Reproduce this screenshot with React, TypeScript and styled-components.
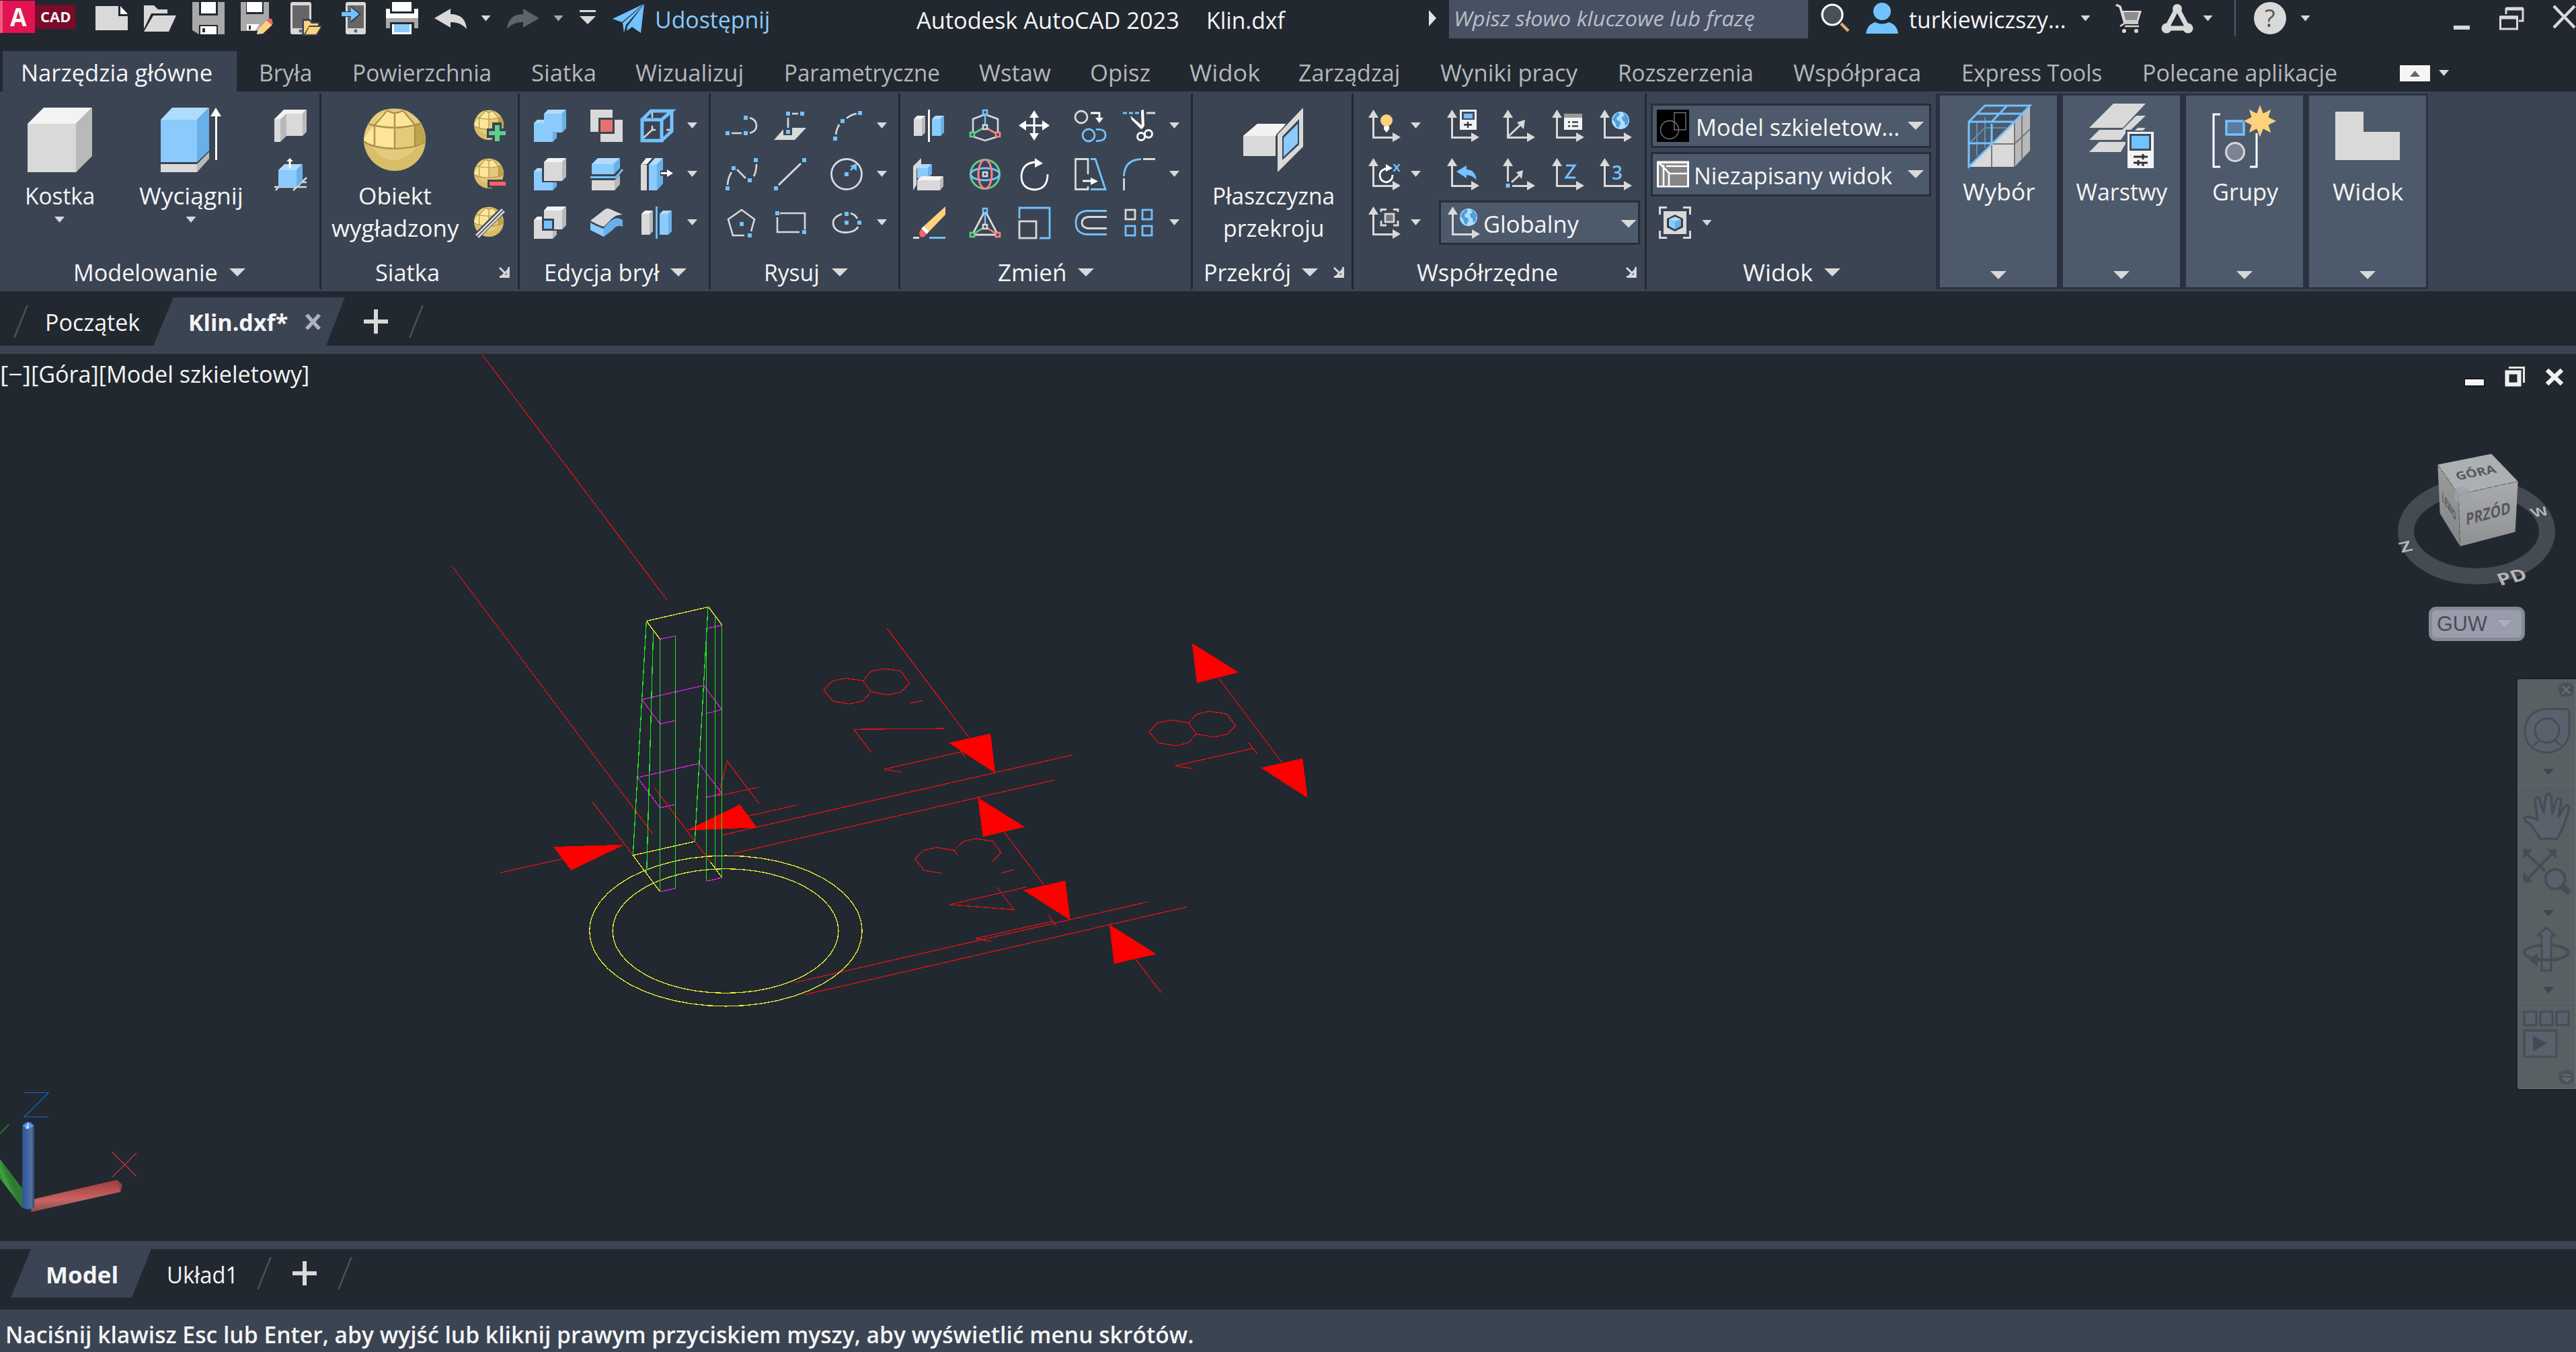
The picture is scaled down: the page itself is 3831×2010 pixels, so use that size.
import React, { useLayoutEffect, useRef, useState } from 'react';
import styled, { createGlobalStyle } from 'styled-components';

const c = {
  dark: '#222830',
  canvas: '#212830',
  panel: '#3b4453',
  tile: '#4d5a6c',
  edge: '#262e3a',
  text: '#f5f5f5',
  dim: '#b4b7bb',
  grey: '#d9d9d9',
  greyTop: '#f3f3f3',
  greySide: '#b9b9b9',
  blue: '#8acafc',
  blueTop: '#aedcff',
  blueSide: '#69b0e8',
  sky: '#72c2ff',
  red: '#e6706f',
  green: '#5fd08a',
  amber: '#fdd27a',
};

const Global = createGlobalStyle`
  html, body { margin: 0; padding: 0; background: ${c.dark}; overflow: hidden; }
  * { box-sizing: border-box; }
  svg { display: block; flex: none; }
`;

/* ---------- text that fills a known label width ---------- */

const LabelBox = styled.span<{ $w: number; $ml: number; $mt: number; $lh: number }>`
  display: block;
  flex: none;
  width: ${p => p.$w}px;
  margin-left: ${p => p.$ml}px;
  margin-top: ${p => p.$mt}px;
  height: ${p => p.$lh}px;
  line-height: ${p => p.$lh}px;
  white-space: nowrap;
`;
const LabelText = styled.span<{ $size: number; $weight: number; $color: string; $italic: boolean; $font: string }>`
  display: inline-block;
  margin-left: -1px;
  transform-origin: 0 50%;
  font-family: ${p => p.$font};
  font-size: ${p => p.$size}px;
  font-weight: ${p => p.$weight};
  font-style: ${p => (p.$italic ? 'italic' : 'normal')};
  color: ${p => p.$color};
`;

type LabelProps = {
  children: string; w: number; ml?: number; mt?: number; lh?: number;
  size?: number; weight?: number; color?: string; italic?: boolean; font?: string;
};
function Label({
  children, w, ml = 0, mt = 0, lh = 48, size = 34, weight = 400, color = c.text, italic = false,
  font = "'Open Sans', 'Noto Sans', sans-serif",
}: LabelProps) {
  const ref = useRef<HTMLSpanElement>(null);
  const [scale, setScale] = useState(1);
  useLayoutEffect(() => {
    if (ref.current) setScale((w + 3) / ref.current.offsetWidth);
  }, [w, children]);
  return (
    <LabelBox $w={w} $ml={ml} $mt={mt} $lh={lh}>
      <LabelText ref={ref} $size={size} $weight={weight} $color={color} $italic={italic} $font={font} style={{ transform: `scaleX(${scale})` }}>
        {children}
      </LabelText>
    </LabelBox>
  );
}

/* ---------- icon parts ---------- */

type Pal = [string, string, string];
const G: Pal = [c.grey, c.greyTop, c.greySide];
const B: Pal = [c.blue, c.blueTop, c.blueSide];

function Block({ x, y, w, h, d, p }: { x: number; y: number; w: number; h: number; d: number; p: Pal }) {
  return (
    <g>
      <rect x={x} y={y + d} width={w - d} height={h - d} fill={p[0]} />
      <path d={`M${x} ${y + d}l${d} ${-d}h${w - d}l${-d} ${d}z`} fill={p[1]} />
      <path d={`M${x + w - d} ${y + d}l${d} ${-d}v${h - d}l${-d} ${d}z`} fill={p[2]} />
    </g>
  );
}
const Dot = ({ x, y, f = c.sky }: { x: number; y: number; f?: string }) => <rect x={x - 3} y={y - 3} width={6} height={6} fill={f} />;
const Node = ({ x, y, s }: { x: number; y: number; s: string }) => (
  <rect x={x - 3} y={y - 3} width={6} height={6} fill={c.panel} stroke={s} strokeWidth={2.6} />
);
const Axes = () => (
  <g fill={c.grey}>
    <path d="M7.5 0L15 12H9V40H36V34L48 41L36 48V43H6V12H0Z" />
  </g>
);
const Globe = ({ x, y, r }: { x: number; y: number; r: number }) => (
  <g>
    <circle cx={x} cy={y} r={r} fill={c.blueTop} />
    <path
      transform={`translate(${x} ${y}) scale(${r / 13})`}
      d="M-10-6L-4-12L-1-10L-3-6L-6-4L-5 0L-1 1L0 5L-3 11L-6 9L-8 3L-12-1ZM3-12L8-9L12-3L11 5L7 8L6 2L3 0L2-5L6-7Z"
      fill="#4b9fdc"
    />
  </g>
);
const Egg = ({ s = 1 }: { s?: number }) => (
  <g transform={`scale(${s})`}>
    <circle cx="48" cy="48" r="46" fill="#d8be6a" />
    <path d="M2 50C4 28 14 8 34 3C44 1 56 1 64 4C84 12 94 30 94 50Q92 56 80 60Q66 76 48 78Q28 78 16 60Z" fill="#e4cb7c" />
    <path d="M17 27Q26 8 37 4Q48 12 62 5L78 27L48 31V61L17 57L2 50Q4 40 17 27Z" fill="#fde59a" />
    <path d="M48 31L78 27V57L48 61Z" fill="#e4cb7c" />
    <path d="M78 27L86 23Q93 34 94 50L78 57Z" fill="#c0a44c" />
    <path
      d="M37 4Q48 12 60 4M37 4L18 26M60 4L79 27M48 8V61M18 26V57M78 27V57M8 24Q48 36 88 23M2 50Q14 60 48 61Q84 60 94 50"
      fill="none" stroke="#ae914a" strokeWidth="2.4"
    />
  </g>
);
const Line = ({ d, s = c.grey, w = 2.6 }: { d: string; s?: string; w?: number }) => <path d={d} fill="none" stroke={s} strokeWidth={w} />;
const Poly = ({ d, f = c.grey }: { d: string; f?: string }) => <path d={d} fill={f} />;

/* Drawn on a 48 unit square unless the name starts with "big" (96 unit square). */
const icons: Record<string, React.ReactNode> = {
  bigBox: <Block x={0} y={0} w={96} h={96} d={24} p={G} />,
  bigExtrude: (
    <g>
      <Poly d="M3 84H57V96H3Z" /><Poly d="M57 84L75 66V76L57 96Z" f={c.greySide} />
      <Poly d="M3 18H57V81H3Z" f={c.blue} /><Poly d="M3 18L20 0H75L57 18Z" f={c.blueTop} /><Poly d="M57 18L75 0V64L57 81Z" f={c.blueSide} />
      <Poly d="M85 0L93 13H87V78H84V13H77Z" f="#fff" />
    </g>
  ),
  bigEgg: <Egg />,
  bigSection: (
    <g>
      <Poly d="M3 42L24 24H64L51 40V72H3Z" /><Poly d="M3 42L24 24H66L54 42Z" f={c.greyTop} />
      <Poly d="M52 40L94 -4V62L52 98Z" f={c.panel} />
      <Poly d="M54 40L92 0V58L54 96Z" /><Poly d="M61 43L86 17V55L61 78Z" f={c.panel} /><Poly d="M63 45L84 24V53L63 73Z" f={c.blue} />
    </g>
  ),
  bigPick: (
    <g>
      <Poly d="M5 94L72 26V94Z" /><Poly d="M72 26L95 4V70L72 94Z" f={c.greySide} />
      <Line d="M38 94V60H72M83 15V82M72 60L95 38M72 28V94" s="#777" w={2} />
      <Line d="M16 26V78M28 20V66M4 60L28 36H60" s="#5a8fb8" w={2} />
      <Line d="M4 27H72L95 3H28L4 27V94L72 27M38 27L61 3M16 15H84M4 59H38V30" s={c.sky} w={3} />
    </g>
  ),
  bigLayers: (
    <g>
      <Poly d="M36 0H84L50 36H0Z" /><Poly d="M70 18H84L62 39H49Z" /><Poly d="M72 36H84L80 40H68Z" />
      <Poly d="M15 39H54V44L47 54H0Z" /><Poly d="M15 57H54V60L47 72H0Z" />
      <path d="M54 40H98V98H54Z" fill={c.tile} />
      <path d="M57 42H96V96H57Z" fill={c.greyTop} /><rect x="60" y="45" width="32" height="25" fill="#404c5c" /><rect x="63" y="48" width="26" height="19" fill={c.sky} />
      <Line d="M66 79H87M80 75V83M66 88H87M73 84V92M80 88V93" s="#333" w={3} />
    </g>
  ),
  bigGroup: (
    <g>
      <Line d="M12 16H2V94H12M56 94H66V44" s="#fff" w={3} />
      <rect x="21" y="26" width="26" height="20" fill="#5c7b9c" stroke={c.sky} strokeWidth="3.5" />
      <circle cx="34" cy="72" r="13.5" fill="#7b8494" stroke={c.grey} strokeWidth="3" />
      <path d="M71 1L76 14L88 8L84 20L96 26L84 32L88 44L76 38L71 51L66 38L54 44L58 32L46 26L58 20L54 8L66 14Z" fill={c.amber} stroke={c.tile} strokeWidth="1" />
    </g>
  ),
  bigView: <Poly d="M0 12H42V42H96V84H0Z" />,
  polysolid: (
    <g>
      <Poly d="M0 14L14 0H48L42 6H26L18 12L9 21L0 14Z" f={c.greyTop} /><Poly d="M0 14H9V48H0Z" /><Poly d="M9 14L18 6V39L9 48Z" f={c.greySide} />
      <Poly d="M18 6H42V39H18Z" /><Poly d="M42 6L48 0V33L42 39Z" f={c.greySide} />
    </g>
  ),
  presspull: (
    <g>
      <Line d="M0 43H43M2 48L7 42M28 48L48 29M36 43H48M42 36H48" w={2.6} />
      <Block x={6} y={9} w={36} h={34} d={9} p={B} /><Poly d="M23 0L28 5H24.5V15H21.5V5H18Z" f="#fff" />
    </g>
  ),
  eggPlus: (
    <g><Egg s={0.48} /><Poly d="M28 19H42V28H50V42H42V50H28V42H20V28H28Z" f={c.panel} /><Poly d="M32 23H39V32H48V38H39V47H32V38H23V32H32Z" f={c.green} /></g>
  ),
  eggMinus: <g><Egg s={0.48} /><Poly d="M21 32H50V44H21Z" f={c.panel} /><Poly d="M24 35H48V41H24Z" f="#ff6163" /></g>,
  eggSlash: <g><Egg s={0.48} /><Line d="M4 45L46 3" s={c.panel} w={10} /><Line d="M4 43L43 4M7 46L46 7" w={2.6} /></g>,
  union: (
    <g>
      <Block x={15} y={0} w={33} h={34} d={6} p={B} />
      <Poly d="M0 20H16V33H28V48H0Z" f={c.blue} /><Poly d="M0 20L5 15H15V20Z" f={c.blueTop} /><Poly d="M28 33H34V42L28 48Z" f={c.blueSide} />
    </g>
  ),
  subtract: (
    <g>
      <Block x={15} y={0} w={33} h={34} d={6} p={G} />
      <Poly d="M0 20L5 15H12V36H28V48H0Z" f={c.blue} /><Poly d="M0 20L5 15H12V20Z" f={c.blueTop} /><Poly d="M28 36H34V42L28 48Z" f={c.blueSide} />
    </g>
  ),
  intersect: (
    <g>
      <Poly d="M15 6H42V34H30V18H15Z" /><Poly d="M15 6L20 0H48L42 6Z" f={c.greyTop} /><Poly d="M42 6L48 0V28L42 34Z" f={c.greySide} />
      <Poly d="M0 20H12V36H28V48H0Z" /><Poly d="M0 20L5 15H12V20Z" f={c.greyTop} /><Poly d="M28 36H34V42L28 48Z" f={c.greySide} />
      <Poly d="M15 21H27V33H15Z" f={c.sky} />
    </g>
  ),
  interfere: <g><Poly d="M0 0H33V12H12V33H0Z" /><Poly d="M36 15H48V48H15V36H36Z" /><Poly d="M15 15H33V33H15Z" f={c.red} /></g>,
  slice: (
    <g>
      <Block x={2} y={0} w={42} h={24} d={9} p={B} /><Line d="M0 28.5H38L48 17" s={c.sky} w={2.8} />
      <Poly d="M2 33H36V48H2Z" /><Poly d="M36 33L44 25V39L36 48Z" f={c.greySide} />
    </g>
  ),
  thicken: (
    <g>
      <Poly d="M20 32Q28 22 34 19Q40 15 48 20V30Q40 26 33 35L20 45Z" f={c.blueSide} /><Poly d="M0 24Q8 29 20 33V45L0 35Z" f={c.blue} />
      <Poly d="M0 21L22 4Q26 1 34 6L48 12Q38 12 32 18L20 30Q12 28 0 21Z" />
    </g>
  ),
  frame: (
    <g>
      <Line d="M17 3V12M17 24V30L4 42M17 30H22M38 30H46" s={c.grey} w={2.4} />
      <Line d="M2 15H31V46H2ZM2 15L15 2H46L31 15M46 2V32L31 46" s={c.sky} w={5} />
    </g>
  ),
  offsetFace: (
    <g>
      <Poly d="M0 10H9V48H0Z" /><Poly d="M0 10L8 0H17L9 9Z" f={c.greyTop} />
      <Poly d="M12 10H24V48H12Z" f={c.blue} /><Poly d="M12 10L21 0H33L24 10Z" f={c.blueTop} /><Poly d="M24 10L33 0V38L24 48Z" f={c.blueSide} />
      <Line d="M29 22.5H39" s={c.panel} w={8} /><Poly d="M30 21H39V17L48 22.5L39 28V24H30Z" f="#fff" />
    </g>
  ),
  mirror3d: <g><Block x={1} y={6} w={17} h={36} d={5} p={G} /><Block x={28} y={6} w={18} h={36} d={5} p={B} /><Line d="M23.5 0V48" s={c.sky} w={2.8} /></g>,
  polyline: <g><Dot x={3} y={35} /><Dot x={30} y={35} /><Dot x={30} y={12} /><Line d="M9 35H24M36 12Q46 15 46 24Q46 32 36 35" /></g>,
  spline3d: (
    <g><Poly d="M0 45L16 27H48L31 45Z" /><rect x="14" y="24" width="13" height="14" fill={c.panel} /><Dot x={21} y={33} /><Dot x={21} y={6} /><Dot x={42} y={6} /><Line d="M21 12V27M27 6H36" /></g>
  ),
  arc: <g><Dot x={7} y={43} /><Dot x={18} y={17} /><Dot x={44} y={5} /><Line d="M8 37Q9 29 13 22M24 13Q31 7 39 6" /></g>,
  spline: <g><Dot x={3} y={45} /><Dot x={12} y={15} /><Dot x={36} y={33} /><Dot x={45} y={3} /><Line d="M3 40Q4 28 9 21M17 17L30 30M42 27Q46 20 46 9" /></g>,
  line: <g><Dot x={3} y={45} /><Dot x={45} y={3} /><Line d="M7 40L40 8" w={3} /></g>,
  circle: <g><circle cx="24" cy="24" r="22.5" fill="none" stroke={c.grey} strokeWidth="2.8" /><Dot x={24} y={24} /><Line d="M30 18L35 13" s={c.sky} /><Poly d="M39 8V19L29 12Z" f={c.sky} /></g>,
  polygon: <g><Line d="M28 43H11L4 19L24 5L43 19L38 37" /><Dot x={24} y={26} /><Dot x={36} y={43} /></g>,
  rect: <g><Line d="M9 10H46V34M38 38H5V16" /><Dot x={5} y={10} /><Dot x={45} y={38} /></g>,
  ellipse: (
    <g><Line d="M17 11Q4 16 4 24Q4 33 13 37Q24 41 35 36Q40 33 41 30M30 10Q37 12 40 18" w={2.8} /><Dot x={24} y={11} /><Dot x={24} y={24} /><Dot x={43} y={24} /></g>
  ),
  mirror: <g><Block x={1} y={9} w={17} h={30} d={5} p={G} /><Block x={28} y={9} w={18} h={30} d={5} p={B} /><Line d="M23.5 0V48" s="#fff" w={2.8} /></g>,
  align3d: (
    <g><Poly d="M0 12L12 0V10L5 16V40L0 48Z" /><Block x={6} y={9} w={22} h={21} d={6} p={B} /><Poly d="M6 33L12 27H45L40 33Z" f={c.greyTop} /><Poly d="M6 33H40V48H6Z" /><Poly d="M40 33L45 27V42L40 48Z" f={c.greySide} /></g>
  ),
  erase: (
    <g><Poly d="M48 0V12L24 37L16 29Z" f={c.amber} /><Poly d="M16 29L24 37L20 41L12 33Z" f="#fff" /><Poly d="M12 34L20 41Q16 47 11 45Q7 39 12 34Z" f="#ff6163" /><Line d="M0 46.5H9" w={3} /><Line d="M24 46.5H48" s={c.sky} w={3} /></g>
  ),
  move3d: (
    <g>
      <Line d="M24 7L6 14V36M24 7L43 14V36M6 40L24 46L43 40" w={2.6} /><Line d="M24 4V24" s={c.sky} w={2.6} /><Line d="M24 26L4 37" s={c.green} /><Line d="M24 26L43 37" s="#f58488" />
      <Node x={24} y={4} s={c.sky} /><Node x={24} y={26} s={c.grey} /><Node x={5} y={37} s={c.green} /><Node x={43} y={37} s="#f58488" />
    </g>
  ),
  rotate3d: (
    <g fill="none" strokeWidth="3">
      <circle cx="24" cy="24" r="21.5" stroke={c.green} /><ellipse cx="24" cy="24" rx="21.5" ry="9" stroke={c.sky} /><ellipse cx="24" cy="24" rx="10" ry="21.5" stroke="#f58488" /><Node x={24} y={24} s={c.grey} />
    </g>
  ),
  scale3d: (
    <g>
      <Line d="M24 6L5 42H43Z" w={2.8} /><Line d="M24 6V28" s={c.sky} /><Line d="M24 30L5 42" s={c.green} /><Line d="M24 30L43 42" s="#f58488" />
      <Node x={24} y={6} s={c.sky} /><Node x={24} y={30} s={c.grey} /><Node x={5} y={42} s={c.green} /><Node x={43} y={42} s="#f58488" />
    </g>
  ),
  move: <Poly f="#fff" d="M24 1L31 12H25.5V22H36V16L47 23.5L36 31V25H25.5V35H31L24 46L17 35H22.5V25H12V31L1 23.5L12 16V22H22.5V12H17Z" />,
  rotate: <g><Line d="M28 6Q6 6 5 27Q5 46 25 47Q44 46 44 24" s="#fff" w={2.8} /><Poly d="M25 0L37 8L25 14Z" f="#fff" /></g>,
  scale: <g><Line d="M2 18V2H47V47H32" s={c.sky} w={2.8} /><rect x="2" y="22" width="25" height="25" fill="none" stroke={c.grey} strokeWidth="2.8" /></g>,
  copy: (
    <g fill="none" strokeWidth="2.8">
      <circle cx="10" cy="11" r="9" stroke={c.grey} /><circle cx="21" cy="38" r="9" stroke={c.sky} /><path d="M32 29.5Q46 28 46 38Q46 47 32 46.5" stroke={c.sky} />
      <path d="M24 5H37V14" stroke="#fff" /><path d="M31 12H43L37 20Z" fill="#fff" />
    </g>
  ),
  stretch: <g fill="none" strokeWidth="2.8"><path d="M20 24V1.5H1.5V46.5H20V42" stroke={c.grey} /><path d="M24 1.5H31L46 46.5H24" stroke={c.sky} /><path d="M12 34H27" stroke="#fff" /><path d="M24 29L35 34.5L24 40Z" fill="#fff" /></g>,
  offset: <g><Line d="M48 6.5H18Q2 8 2 24Q2 40 18 41.5H48" s={c.sky} w={2.8} /><Line d="M48 15.5H20Q11 17 11 24Q11 31 20 32.5H48" w={2.8} /></g>,
  trim: (
    <g>
      <Line d="M0 5H6M9 5H15M18 5H24" s={c.sky} w={3} /><Line d="M35 5H48" w={3} />
      <Poly d="M27 1L31 0L32 24L28 29Z" f="#fff" /><Poly d="M11 9L31 26L27 29L13 15Z" f="#fff" />
      <circle cx="27" cy="40" r="5.5" fill="none" stroke="#fff" strokeWidth="2.8" /><circle cx="38" cy="36" r="5.5" fill="none" stroke="#fff" strokeWidth="2.8" />
    </g>
  ),
  fillet: <g><Line d="M1.5 27Q2 3 27 1.5" s={c.sky} w={2.8} /><Line d="M30 1.5H48M1.5 30V48" w={2.8} /></g>,
  array: (
    <g fill="none" strokeWidth="2.8"><rect x="4" y="5" width="14" height="14" stroke={c.grey} /><rect x="29" y="5" width="14" height="14" stroke={c.sky} /><rect x="4" y="29" width="14" height="14" stroke={c.sky} /><rect x="29" y="29" width="14" height="14" stroke={c.sky} /></g>
  ),
  ucsLight: <g><Axes /><circle cx="27" cy="16" r="9" fill={c.amber} /><Poly d="M20 20H34L30 25H24Z" f={c.amber} /><Poly d="M23 25H31V29L27 34L23 29Z" f="#fff" /></g>,
  ucsRotX: (
    <g>
      <Axes /><Line d="M29 15Q17 17 17 26Q18 35 27 36Q36 34 36 25" s="#fff" w={2.8} /><Poly d="M26 9L36 15L26 20Z" f="#fff" />
      <text x="36" y="20" fontSize="20" fontWeight="600" fill={c.sky} fontFamily="Open Sans, sans-serif" textLength="12" lengthAdjust="spacingAndGlyphs">x</text>
    </g>
  ),
  ucsFace: <g><Axes /><Line d="M19 8V4.5H27M37 4.5H44V8M19 21V28H27M37 28H44V21" w={2.8} /><rect x="25" y="11" width="13" height="12" fill="#777" stroke={c.grey} strokeWidth="2.6" /></g>,
  ucsNamed: (
    <g><Axes /><rect x="19" y="0" width="25" height="30" fill={c.greyTop} /><rect x="22" y="3" width="19" height="12" fill="#404c5c" /><rect x="25" y="6" width="13" height="7" fill={c.sky} /><Line d="M25 22.5H37M31 18V27" s="#333" w={2.4} /></g>
  ),
  ucsPrev: <g><Axes /><Poly d="M14 20L29 11V17Q42 17 44 33Q39 26 29 25V30Z" f={c.sky} /></g>,
  ucsZ3: <g><Axes /><Line d="M9 39L28 21" w={3} /><Poly d="M21 19L33 15L31 29Z" /></g>,
  ucsOrigin: <g><Axes /><rect x="4" y="35" width="10" height="12" fill={c.panel} /><Dot x={7.5} y={41} /><Line d="M13 36L25 25" w={3} /><Poly d="M20 21L30 18L28 31Z" /></g>,
  ucsList: <g><Axes /><rect x="18" y="6" width="27" height="24" fill={c.greyTop} /><rect x="18" y="6" width="27" height="6" fill="#999" /><Line d="M24 18.5H27M30 18.5H39M24 24.5H27M30 24.5H39" s="#444" w={2.4} /></g>,
  ucsZ: <g><Axes /><Line d="M21 11H34L21 29H35" s={c.sky} w={3} /></g>,
  ucsWorld: <g><Axes /><Globe x={31} y={16} r={13} /></g>,
  ucs3: <g><Axes /><text x="18" y="32" fontSize="28" fontWeight="600" fill={c.sky} fontFamily="Open Sans, sans-serif">3</text></g>,
  wire: <g><rect width="48" height="48" fill="#000" /><circle cx="19" cy="30" r="13.5" fill="none" stroke="#777" strokeWidth="1.4" /><rect x="26" y="4.5" width="17" height="25.5" fill="none" stroke="#777" strokeWidth="1.4" /></g>,
  viewIcon: <g><rect y="4.5" width="48" height="39" fill="#fff" /><Poly d="M3 8H45V41H3Z" f="#858585" /><Line d="M3 7L18 22V43M18 23H46M10 10V43M14 12H46" s="#fff" w={2.6} /></g>,
  viewport: (
    <g>
      <Line d="M1.5 12V1.5H12M36 1.5H46.5V12M1.5 36V46.5H12M36 46.5H46.5V36" w={3} /><Poly d="M7 7H41V41H7Z" /><Poly d="M24 12L36 18V31L24 37L12 31V18Z" f="#333d4c" />
      <Poly d="M24 15L33 19L24 23L15 19Z" f={c.blueTop} /><Poly d="M15 19L24 23V34L15 29Z" f={c.blue} /><Poly d="M24 23L33 19V29L24 34Z" f={c.blueSide} />
    </g>
  ),
  fileNew: <g><Poly d="M0 6H34V21H48V42H0Z" /><Poly d="M37 6L48 18H37Z" f="#fff" /></g>,
  fileOpen: <g><Poly d="M0 5H15L21 11H35V17H11L0 40Z" /><Poly d="M14 20H48L37 44H0Z" /></g>,
  fileSave: <g><Poly d="M0 0H10V20H38V0H48V48H38V34H10V48L0 42Z" f="#a9a9a9" /><Poly d="M0 20H48V34H0Z" f="#a9a9a9" /><Poly d="M13 0H35V17H13Z" f="#fff" /><Poly d="M12 36H36V48H12Z" f="#fff" /><Poly d="M15 39H19V45H15Z" f="#333" /></g>,
  fileSaveAs: (
    <g>
      <Poly d="M0 0H8V18H34V0H42V24L24 43H0Z" f="#a9a9a9" /><Poly d="M9 0H32V15H9Z" f="#fff" /><Poly d="M9 33H28L22 42H9Z" f="#fff" /><Poly d="M12 35H15V41H12Z" f="#333" />
      <Poly d="M39 27L47 34L33 47L24 48L26 40Z" f={c.amber} /><Poly d="M41 24L46 25L48 31L46 34L39 28Z" f="#ee6566" /><Poly d="M26 40L31 46L24 48Z" f={c.grey} />
    </g>
  ),
  mobileOpen: (
    <g>
      <rect x="1" y="0" width="31" height="48" rx="3" fill={c.grey} /><rect x="4" y="5" width="25" height="34" fill="#666" /><circle cx="16" cy="43" r="2.5" fill="#666" />
      <Poly d="M19 25H30L34 30H44V35H48L41 50H18Z" f={c.panel} /><Poly d="M21 28H29L32 32H42V35H29L21 48Z" f={c.amber} /><Poly d="M29 37H46L39 48H23Z" f={c.amber} />
    </g>
  ),
  mobileSave: (
    <g>
      <rect x="12" y="0" width="30" height="48" rx="3" fill={c.grey} /><rect x="15" y="5" width="24" height="34" fill="#666" /><circle cx="27" cy="43" r="2.5" fill="#666" />
      <Poly d="M6 14H20V6L35 18L20 31V22H6Z" f="#333d4c" /><Poly d="M6 15H20V8L32 18L20 28V21H6Z" f={c.sky} />
    </g>
  ),
  print: <g><Poly d="M9 0H38V14H9Z" f="#fff" /><Poly d="M0 10H6V17H42V10H48V24H0Z" f="#fff" /><Poly d="M0 24H48V39H42V30H6V39H0Z" f="#a9a9a9" /><Poly d="M9 33H38V48H9Z" f="#fff" /><Poly d="M12 33H35V45H12Z" f={c.blue} /></g>,
  undo: <Poly d="M0 24L24 10V18Q46 18 48 40Q38 29 24 30V38Z" />,
  redo: <Poly d="M48 24L24 10V18Q2 18 0 40Q10 29 24 30V38Z" f="#5f6469" />,
  plane: <g><Poly d="M0 25L46 3L14 30Z" f={c.sky} /><Poly d="M15 31L47 3L20 34L17 46Z" f={c.sky} /><Poly d="M22 36L47 3L42 46L29 37L21 43Z" f={c.sky} /></g>,
  search: <g><circle cx="19" cy="19" r="15" fill="#4a5058" stroke="#fff" strokeWidth="3.2" /><Line d="M32 32L43 43" s="#e0ab6c" w={4.5} /></g>,
  person: <g><circle cx="24" cy="14" r="13" fill={c.sky} /><Poly d="M0 47Q2 33 14 30Q24 35 34 30Q46 33 48 47Z" f={c.sky} /></g>,
  cart: (
    <g>
      <Line d="M4 4L10 7L17 31H37" w={3.5} /><Poly d="M12 13H42L37 29H16Z" /><Poly d="M15 15H38L35 27H18Z" f="#8d8d8d" /><Line d="M17 36H38M10 36L16 32" w={2.6} />
      <circle cx="16" cy="43" r="3" fill={c.grey} /><circle cx="34" cy="43" r="3" fill={c.grey} />
    </g>
  ),
  adsk: (
    <g>
      <path d="M24 9L8 39H40Z" fill="none" stroke={c.grey} strokeWidth="7" strokeLinejoin="round" /><circle cx="24" cy="10" r="7" fill={c.grey} />
      <circle cx="8" cy="39" r="7.5" fill={c.grey} /><circle cx="40" cy="39" r="7.5" fill={c.grey} />
    </g>
  ),
  help: <g><circle cx="24" cy="24" r="24" fill={c.grey} /><text x="16" y="37" fontSize="36" fill="#555" fontFamily="Open Sans, sans-serif">?</text></g>,
};

function Icon({ n }: { n: string }) {
  const s = n.startsWith('big') ? 96 : 48;
  return <svg width={s} height={s} viewBox={`0 0 ${s} ${s}`} overflow="visible">{icons[n]}</svg>;
}

const Caret = styled.i<{ $w?: number; $h?: number; $ml?: number; $mt?: number; $color?: string }>`
  display: block;
  flex: none;
  width: ${p => p.$w ?? 15}px;
  height: ${p => p.$h ?? 9}px;
  margin-left: ${p => p.$ml ?? 0}px;
  margin-top: ${p => p.$mt ?? 0}px;
  background: ${p => p.$color ?? c.grey};
  clip-path: polygon(0 0, 100% 0, 50% 100%);
`;

/* ---------- title bar ---------- */

const Window = styled.div`
  width: 3831px;
  height: 2010px;
  display: flex;
  flex-direction: column;
  overflow: hidden;
  background: ${c.dark};
`;
const TitleBar = styled.header`
  height: 76px;
  flex: none;
  display: flex;
  align-items: flex-start;
`;
const Slot = styled.div<{ $ml?: number }>`
  display: flex;
  flex: none;
  align-items: center;
  height: 54px;
  margin-left: ${p => p.$ml ?? 0}px;
`;
const Logo = styled.div`
  display: flex;
  flex: none;
  align-items: flex-start;
  width: 112px;
`;
const LogoA = styled.div`
  width: 52px;
  height: 48px;
  margin-top: 1px;
  padding-left: 16px;
  background: linear-gradient(90deg, #ef5a80 0 4px, #e31352 4px);
`;
const LogoCad = styled.div`
  width: 60px;
  height: 36px;
  margin-top: 7px;
  padding-left: 9px;
  background: #7a0b2b;
`;
const QuickMenu = styled.div`
  width: 24px;
  padding-bottom: 3px;
  display: flex;
  flex-direction: column;
  gap: 6px;
  &::before { content: ''; height: 3px; background: ${c.grey}; }
`;
const Search = styled.div`
  width: 534px;
  height: 57px;
  flex: none;
  margin-left: 19px;
  padding-left: 8px;
  background: #485163;
`;
const PlayMark = styled.i`
  width: 11px;
  height: 24px;
  background: #e4e4e4;
  clip-path: polygon(0 0, 100% 50%, 0 100%);
`;
const Divider = styled.i`
  width: 2px;
  height: 54px;
  flex: none;
  margin-left: 32px;
  background: #4c596b;
`;

const quick: [string, number][] = [
  ['fileNew', 30], ['fileOpen', 24], ['fileSave', 24], ['fileSaveAs', 24], ['mobileOpen', 25], ['mobileSave', 23], ['print', 24], ['undo', 24],
];

function TopBar() {
  return (
    <TitleBar>
      <Logo>
        <LogoA><Label w={22} size={37} weight={700}>A</Label></LogoA>
        <LogoCad><Label w={42} size={21} weight={700} lh={36}>CAD</Label></LogoCad>
      </Logo>
      {quick.map(([n, ml]) => <Slot key={n} $ml={ml}><Icon n={n} /></Slot>)}
      <Slot $ml={21}><Caret /></Slot>
      <Slot $ml={24}><Icon n="redo" /></Slot>
      <Slot $ml={21}><Caret $color="#a9a9a9" /></Slot>
      <Slot $ml={24}><QuickMenu><Caret $w={24} $h={12} /></QuickMenu></Slot>
      <Slot $ml={25}><Icon n="plane" /></Slot>
      <Label w={168} ml={16} mt={5} color={c.blue}>Udostępnij</Label>
      <Label w={388} ml={221} mt={6}>Autodesk AutoCAD 2023</Label>
      <Label w={114} ml={43} mt={6}>Klin.dxf</Label>
      <Slot $ml={216}><PlayMark /></Slot>
      <Search><Label w={445} mt={3} size={31} italic color="#b9bec6">Wpisz słowo kluczowe lub frazę</Label></Search>
      <Slot $ml={17}><Icon n="search" /></Slot>
      <Slot $ml={21}><Icon n="person" /></Slot>
      <Label w={231} ml={17} mt={5}>turkiewiczszy...</Label>
      <Slot $ml={23}><Caret /></Slot>
      <Slot $ml={34}><Icon n="cart" /></Slot>
      <Slot $ml={23}><Icon n="adsk" /></Slot>
      <Slot $ml={14}><Caret /></Slot>
      <Divider />
      <Slot $ml={27}><Icon n="help" /></Slot>
      <Slot $ml={21}><Caret /></Slot>
      <Slot $ml={213}>
        <svg width="24" height="48" viewBox="0 0 24 48"><rect y="35" width="24" height="6" fill={c.grey} /></svg>
      </Slot>
      <Slot $ml={44}>
        <svg width="38" height="48" viewBox="0 0 38 48" fill="none" stroke={c.grey}>
          <path d="M10 18V10H35V28H29" strokeWidth="3" /><path d="M10 10H35" strokeWidth="5" />
          <rect x="1.5" y="22" width="25" height="18" strokeWidth="3" /><path d="M1 23H28" strokeWidth="5" />
        </svg>
      </Slot>
      <Slot $ml={40}>
        <svg width="36" height="48" viewBox="0 0 36 48" stroke={c.grey} strokeWidth="4.5"><path d="M3 6L34 38M34 6L3 38" /></svg>
      </Slot>
    </TitleBar>
  );
}

/* ---------- ribbon tabs ---------- */

const TabRow = styled.nav`
  height: 60px;
  flex: none;
  display: flex;
  align-items: stretch;
  padding-left: 4px;
`;
const Tab = styled.div<{ $on?: boolean; $pl: number; $pr: number }>`
  display: flex;
  padding: 2px ${p => p.$pr}px 0 ${p => p.$pl}px;
  background: ${p => (p.$on ? c.panel : 'transparent')};
`;
const Collapse = styled.div`
  width: 45px;
  height: 24px;
  margin: 21px 0 0 95px;
  display: flex;
  align-items: center;
  justify-content: center;
  background: #f5f5f5;
`;
const UpMark = styled(Caret)`
  transform: rotate(180deg);
`;
const tabs: [string, number, number][] = [
  ['Bryła', 34, 76], ['Powierzchnia', 63, 204], ['Siatka', 62, 94], ['Wizualizuj', 61, 158], ['Parametryczne', 63, 229], ['Wstaw', 61, 104],
  ['Opisz', 61, 87], ['Widok', 61, 102], ['Zarządzaj', 60, 148], ['Wyniki pracy', 63, 201], ['Rozszerzenia', 63, 199], ['Współpraca', 62, 187],
  ['Express Tools', 63, 206], ['Polecane aplikacje', 63, 287],
];

/* ---------- ribbon panels ---------- */

const Ribbon = styled.section`
  height: 297px;
  flex: none;
  display: flex;
  padding: 3px 0;
  background: ${c.panel};
`;
const Panel = styled.div<{ $w: number; $last?: boolean }>`
  width: ${p => p.$w}px;
  height: 291px;
  flex: none;
  display: flex;
  flex-direction: column;
  border-right: ${p => (p.$last ? 0 : 3)}px solid ${c.dark};
`;
const Body = styled.div`
  height: 242px;
  flex: none;
  display: flex;
  align-items: flex-start;
`;
const Title = styled.div`
  height: 48px;
  display: flex;
  align-items: center;
`;
const Stack = styled.div<{ $ml: number }>`
  display: flex;
  flex-direction: column;
  flex: none;
  gap: 24px;
  width: 48px;
  padding-top: 24px;
  margin-left: ${p => p.$ml}px;
`;
const CaretStack = styled(Stack)`
  width: 15px;
  gap: 63px;
  padding-top: 43px;
`;
const BigButton = styled.div<{ $ml: number; $w: number }>`
  display: flex;
  flex: none;
  flex-direction: column;
  align-items: center;
  width: ${p => p.$w}px;
  margin-left: ${p => p.$ml}px;
  padding-top: 21px;
`;
const BigLabels = styled.div`
  display: flex;
  flex-direction: column;
  align-items: center;
  padding: 11px 0 7px;
`;
const Combo = styled.div<{ $w: number; $mt?: number }>`
  display: flex;
  align-items: center;
  width: ${p => p.$w}px;
  height: 66px;
  margin-top: ${p => p.$mt ?? 0}px;
  border: 3px solid ${c.edge};
  background: ${c.tile};
`;
const IconRow = styled.div<{ $mb?: number }>`
  display: flex;
  margin-bottom: ${p => p.$mb ?? 24}px;
`;
const RowCell = styled.div<{ $ml: number }>`
  display: flex;
  align-items: center;
  margin-left: ${p => p.$ml}px;
`;
const Column = styled.div<{ $ml: number; $pt: number }>`
  margin-left: ${p => p.$ml}px;
  padding-top: ${p => p.$pt}px;
`;

const Icons = ({ ml, n }: { ml: number; n: string[] }) => <Stack $ml={ml}>{n.map(i => <Icon key={i} n={i} />)}</Stack>;
const Carets = ({ ml }: { ml: number }) => <CaretStack $ml={ml}><Caret /><Caret /><Caret /></CaretStack>;
const Launcher = ({ ml }: { ml: number }) => (
  <RowCell $ml={ml}>
    <svg width="16" height="16" viewBox="0 0 16 16" fill="none" stroke={c.grey} strokeWidth="2.8"><path d="M1 1L10 10" /><path d="M14.5 0V14.5H1M13 5V13H5Z" /></svg>
  </RowCell>
);
const TitleCaret = ({ ml }: { ml: number }) => <Caret $w={24} $h={12} $ml={ml} />;

const TileGroup = styled.div`
  display: grid;
  grid-template-columns: repeat(4, 174px);
  justify-content: space-between;
  width: 732px;
  height: 291px;
  padding: 3px 3px 3px 6px;
  background: #2a323f;
`;
const Tile = styled.div`
  display: flex;
  flex-direction: column;
  align-items: center;
  padding: 12px 0;
  background: ${c.tile};
`;
const TileCaret = styled(Caret)`
  margin-top: auto;
`;
const tiles: [string, string, number][] = [['bigPick', 'Wybór', 105], ['bigLayers', 'Warstwy', 133], ['bigGroup', 'Grupy', 95], ['bigView', 'Widok', 102]];

function RibbonPanels() {
  return (
    <Ribbon>
      <Panel $w={478}>
        <Body>
          <BigButton $ml={38} $w={101}>
            <Icon n="bigBox" /><BigLabels><Label w={101}>Kostka</Label></BigLabels><Caret />
          </BigButton>
          <BigButton $ml={69} $w={152}>
            <Icon n="bigExtrude" /><BigLabels><Label w={152}>Wyciągnij</Label></BigLabels><Caret />
          </BigButton>
          <Icons ml={48} n={['polysolid', 'presspull']} />
        </Body>
        <Title><Label w={212} ml={110}>Modelowanie</Label><TitleCaret ml={19} /></Title>
      </Panel>
      <Panel $w={295}>
        <Body>
          <BigButton $ml={16} $w={186}>
            <Icon n="bigEgg" /><BigLabels><Label w={106}>Obiekt</Label><Label w={186}>wygładzony</Label></BigLabels>
          </BigButton>
          <Icons ml={24} n={['eggPlus', 'eggMinus', 'eggSlash']} />
        </Body>
        <Title><Label w={93} ml={81}>Siatka</Label><Launcher ml={90} /></Title>
      </Panel>
      <Panel $w={284}>
        <Body>
          <Icons ml={21} n={['union', 'subtract', 'intersect']} />
          <Icons ml={36} n={['interfere', 'slice', 'thicken']} />
          <Icons ml={27} n={['frame', 'offsetFace', 'mirror3d']} />
          <Carets ml={21} />
        </Body>
        <Title><Label w={169} ml={37}>Edycja brył</Label><TitleCaret ml={18} /></Title>
      </Panel>
      <Panel $w={282}>
        <Body>
          <Icons ml={22} n={['polyline', 'spline', 'polygon']} />
          <Icons ml={24} n={['spline3d', 'line', 'rect']} />
          <Icons ml={36} n={['arc', 'circle', 'ellipse']} />
          <Carets ml={21} />
        </Body>
        <Title><Label w={80} ml={80}>Rysuj</Label><TitleCaret ml={20} /></Title>
      </Panel>
      <Panel $w={435}>
        <Body>
          <Icons ml={19} n={['mirror', 'align3d', 'erase']} />
          <Icons ml={35} n={['move3d', 'rotate3d', 'scale3d']} />
          <Icons ml={25} n={['move', 'rotate', 'scale']} />
          <Icons ml={36} n={['copy', 'stretch', 'offset']} />
          <Icons ml={24} n={['trim', 'fillet', 'array']} />
          <Carets ml={21} />
        </Body>
        <Title><Label w={99} ml={146}>Zmień</Label><TitleCaret ml={19} /></Title>
      </Panel>
      <Panel $w={239}>
        <Body>
          <BigButton $ml={30} $w={179}>
            <Icon n="bigSection" /><BigLabels><Label w={179}>Płaszczyzna</Label><Label w={147}>przekroju</Label></BigLabels>
          </BigButton>
        </Body>
        <Title><Label w={127} ml={17}>Przekrój</Label><TitleCaret ml={18} /><Launcher ml={23} /></Title>
      </Panel>
      <Panel $w={436}>
        <Body>
          <Icons ml={22} n={['ucsLight', 'ucsRotX', 'ucsFace']} />
          <Carets ml={15} />
          <Column $ml={27} $pt={24}>
            <IconRow>
              <RowCell $ml={12}><Icon n="ucsNamed" /></RowCell><RowCell $ml={35}><Icon n="ucsZ3" /></RowCell>
              <RowCell $ml={25}><Icon n="ucsList" /></RowCell><RowCell $ml={23}><Icon n="ucsWorld" /></RowCell>
            </IconRow>
            <IconRow $mb={15}>
              <RowCell $ml={12}><Icon n="ucsPrev" /></RowCell><RowCell $ml={35}><Icon n="ucsOrigin" /></RowCell>
              <RowCell $ml={25}><Icon n="ucsZ" /></RowCell><RowCell $ml={23}><Icon n="ucs3" /></RowCell>
            </IconRow>
            <Combo $w={299}>
              <RowCell $ml={10}><Icon n="ucsWorld" /></RowCell>
              <Label w={139} ml={6} mt={4}>Globalny</Label>
              <Caret $w={24} $h={12} $ml={64} $mt={3} />
            </Combo>
          </Column>
        </Body>
        <Title><Label w={207} ml={95}>Współrzędne</Label><Launcher ml={103} /></Title>
      </Panel>
      <Panel $w={430} $last>
        <Body>
          <Column $ml={6} $pt={15}>
            <Combo $w={417}>
              <RowCell $ml={6}><Icon n="wire" /></RowCell>
              <Label w={300} ml={11} mt={4}>Model szkieletow...</Label>
              <Caret $w={24} $h={12} $ml={14} />
            </Combo>
            <Combo $w={417} $mt={6}>
              <RowCell $ml={6}><Icon n="viewIcon" /></RowCell>
              <Label w={292} ml={8} mt={4}>Niezapisany widok</Label>
              <Caret $w={24} $h={12} $ml={25} />
            </Combo>
            <Column $ml={12} $pt={15}>
              <IconRow><Icon n="viewport" /><RowCell $ml={16}><Caret /></RowCell></IconRow>
            </Column>
          </Column>
        </Body>
        <Title><Label w={101} ml={144}>Widok</Label><TitleCaret ml={19} /></Title>
      </Panel>
      <TileGroup>
        {tiles.map(([icon, name, w]) => (
          <Tile key={name}><Icon n={icon} /><Label w={w} mt={11}>{name}</Label><TileCaret $w={24} $h={12} /></Tile>
        ))}
      </TileGroup>
    </Ribbon>
  );
}

/* ---------- slanted document and layout tabs ---------- */

const DocTabs = styled.div`
  height: 81px;
  flex: none;
  display: flex;
  align-items: flex-start;
`;
const Strip = styled.div`
  height: 12px;
  flex: none;
  background: ${c.panel};
`;
const Slash = styled.i<{ $ml: number; $mt: number }>`
  display: block;
  flex: none;
  width: 22px;
  height: 48px;
  margin: ${p => p.$mt}px 0 0 ${p => p.$ml}px;
  background: #4a525e;
  clip-path: polygon(88% 0, 100% 0, 12% 100%, 0 100%);
`;
const ActiveDoc = styled.div`
  display: flex;
  flex: none;
  width: 285px;
  height: 72px;
  margin: 9px 0 0 22px;
  padding-left: 53px;
  background: ${c.panel};
  clip-path: polygon(30px 0, 100% 0, 257px 100%, 0 100%);
`;
const ActiveLayout = styled.div`
  flex: none;
  width: 209px;
  height: 72px;
  margin-left: 16px;
  padding: 14px 0 0 53px;
  background: ${c.panel};
  clip-path: polygon(30px 0, 100% 0, 180px 100%, 0 100%);
`;
const PlusBox = styled.div<{ $ml: number; $mt: number }>`
  margin: ${p => p.$mt}px 0 0 ${p => p.$ml}px;
`;
const Plus = ({ ml, mt }: { ml: number; mt: number }) => (
  <PlusBox $ml={ml} $mt={mt}><svg width="36" height="36" viewBox="0 0 36 36" fill={c.grey}><path d="M15 0H21V15H36V21H21V36H15V21H0V15H15Z" /></svg></PlusBox>
);
const CloseBox = styled.div`
  margin: 25px 0 0 27px;
`;
const LayoutTabs = styled.div`
  height: 90px;
  flex: none;
  display: flex;
  align-items: flex-start;
`;
const Status = styled.footer`
  height: 63px;
  flex: none;
  padding: 13px 0 0 9px;
  background: ${c.panel};
`;

/* ---------- drawing area ---------- */

const Viewport = styled.main`
  position: relative;
  height: 1319px;
  flex: none;
  overflow: hidden;
  background: ${c.canvas};
`;
const Canvas = styled.svg`
  position: absolute;
  inset: 0;
`;
const ViewLabel = styled.div`
  position: absolute;
  left: 1px;
  top: 6px;
  display: flex;
`;
const Ucs = styled.div`
  position: absolute;
  left: 3612px;
  top: 376px;
  display: flex;
  align-items: center;
  gap: 15px;
  width: 143px;
  height: 51px;
  padding-left: 8px;
  border-radius: 11px;
  border: 5px solid #868997;
  background: #9a9dab;
`;
const NavBar = styled.aside`
  position: absolute;
  left: 3744px;
  top: 484px;
  width: 87px;
  height: 609px;
  border-radius: 3px 0 0 3px;
  background: #596064;
  border: 1px solid #686e73;
  box-shadow: 0 0 3px #12161b;
`;

const ring = (cx: number, cy: number, rx: number, ry: number) =>
  Array.from({ length: 48 }, (_, i) => {
    const a = (i / 48) * Math.PI * 2;
    return `${(cx + rx * Math.cos(a)).toFixed(1)},${(cy + ry * Math.sin(a)).toFixed(1)}`;
  }).join(' ');

const Thin = ({ d, s }: { d: string; s: string }) => <path d={d} fill="none" stroke={s} strokeWidth="1.3" vectorEffect="non-scaling-stroke" />;

const RED = '#e01016';

function Model() {
  return (
    <g shapeRendering="crispEdges">
      <Thin s={RED} d="M715.5 525L992 892M672.5 842L970.7 1239.5M1072.7 1241.7L1595 1122.3M1091 1268.7L1569 1159.4M744 1297.5L836 1277" />
      <g transform="translate(1150 900) scale(.5421 .3954)">
        <Thin s={RED} d="M312 86L537 497M138 317L163 284L198 274L246 283L268 325L246 359L209 371L163 360ZM246 283L268 248L303 238L350 247L374 293L350 326L315 337L268 325M375 368L411 357M268 552L221 466L468 463M350 627L304 616L515 551M515 548L527 572" />
        <Thin s={RED} d="M1222 274L1396 592M1031 475L1055 442L1091 431L1139 442L1161 484L1138 517L1103 528L1056 517ZM1139 442L1162 409L1197 398L1244 408L1268 452L1245 484L1210 495L1161 484M1151 614L1102 603L1316 538M1304 516L1328 559" />
        <Thin s={RED} d="M633 852L743 1052M461 1007L414 997L389 953L413 921L449 910L496 921L507 941M496 921L521 887L556 877L602 887L625 930L603 961M625 1006L660 994M695 1059L484 1125L660 1144L614 1060M600 1264L555 1253L767 1187M755 1165L778 1209" />
        <Thin s={RED} d="M60 1418L1026 1115M86 1464L1134 1134M994 1330L1064 1456" />
        <path fill="#f00" d="M481 517L596 482L609 630ZM1149 142L1277 252L1162 292ZM1338 611L1452 575L1466 724ZM561 722L690 833L575 870ZM686 1071L801 1035L815 1184ZM922 1200L1051 1311L935 1348Z" />
      </g>
      <g fill="none" stroke="#f2f22a" strokeWidth="1.3">
        <polygon points={ring(1079.4, 1384, 202.8, 111.9)} />
        <polygon points={ring(1079, 1384, 168, 92.4)} />
      </g>
      <g transform="translate(800 880) scale(.33333)">
        <path fill="#f00" d="M662 1064L901 948L977 1051ZM69 1137L387 1127L148 1242Z" />
        <Thin s="#e020e0" d="M545 211L614 196M752 163L821 149M740 417L464 480L545 589L614 573M740 417L820 525L752 542M719 765L444 828L545 963L614 948M719 765L821 900L752 916M545 1337L614 1322M752 1290L821 1275" />
        <Thin s={RED} d="M244 937L424 1175M519 872L770 1205M804 910L844 754L987 944M804 910L988 870M940 999L1152 951" />
        <Thin s="#f2f22a" d="M545 211L484 130L761 67L821 147M700 1113L424 1175L545 1337M770 1205L821 1274" />
        <Thin s="#1fe61f" d="M484 130L424 1175M515 172L485 1255M545 211V1337M614 196V1322M759 67L700 1113M752 163V1290M791 108V1235M821 147V1274" />
      </g>
    </g>
  );
}

function AxisTripod() {
  return (
    <g>
      <defs>
        <linearGradient id="gx" x1="0.45" y1="0" x2="0.55" y2="1"><stop offset="0" stopColor="#8f3d3e" /><stop offset=".3" stopColor="#b24d4d" /><stop offset=".6" stopColor="#c96464" /><stop offset="1" stopColor="#7d4a4c" /></linearGradient>
        <linearGradient id="gz"><stop offset="0" stopColor="#31548c" /><stop offset=".4" stopColor="#3a62a3" /><stop offset=".75" stopColor="#54719f" /><stop offset="1" stopColor="#2f4570" /></linearGradient>
        <linearGradient id="gy" x1="0" y1=".6" x2=".35" y2=".3"><stop offset="0" stopColor="#2b6a2b" /><stop offset=".6" stopColor="#3fa33f" /><stop offset="1" stopColor="#2f7a33" /></linearGradient>
      </defs>
      <path d="M0 1723L34 1768V1797L0 1752Z" fill="url(#gy)" />
      <path d="M49 1783L174 1754L182 1762L179 1772L46 1802Z" fill="url(#gx)" />
      <path d="M174 1754L182 1762L179 1772Z" fill="#8a4446" />
      <path d="M33 1673Q42 1663 51 1673V1795Q42 1801 33 1795Z" fill="url(#gz)" />
      <path d="M34 1674L42 1668L50 1674Q42 1681 34 1674Z" fill="#5a9bf0" /><path d="M42 1668L38 1678H43Z" fill="#b9d8ff" />
      <g fill="none" strokeWidth="1.2">
        <path d="M36 1624.5H72L36 1660.5H72" stroke="#1c62c8" />
        <path d="M167 1713L203 1749M203 1714L167 1750" stroke="#c8323c" />
        <path d="M13 1672L0 1685" stroke="#23a023" />
      </g>
    </g>
  );
}

function ViewCube() {
  return (
    <g>
      <defs>
        <linearGradient id="front" x1="0" y1="0" x2="0" y2="1"><stop offset="0" stopColor="#a9abad" /><stop offset="1" stopColor="#8f9092" /></linearGradient>
        <linearGradient id="side" x1="0" y1="0" x2="0" y2="1"><stop offset="0" stopColor="#9a9b9d" /><stop offset="1" stopColor="#838587" /></linearGradient>
      </defs>
      <g transform="translate(3531 500) scale(.33333)" fontFamily="Open Sans, sans-serif" fontWeight="700">
        <ellipse cx="456" cy="870" rx="315" ry="200" fill="none" stroke="#454b53" strokeWidth="72" />
        <g fill="#b4b4b4" stroke="#2a2f36" strokeWidth="4" paintOrder="stroke">
          <text transform="matrix(1.3 -.3 .35 .85 122 966)" fontSize="72">Z</text>
          <text transform="matrix(1.2 -.2 .5 .85 712 808)" fontSize="62">W</text>
          <text transform="matrix(1.25 -.28 .45 .95 562 1112)" fontSize="74">PD</text>
        </g>
        <path d="M283 572L523 524L641 647L376 705Z" fill="#adb0b3" />
        <path d="M283 572L376 705L383 937L293 790Z" fill="url(#side)" />
        <path d="M376 705L641 647L629 872L383 937Z" fill="url(#front)" />
        <path d="M283 572L376 705L383 937M376 705L641 647L523 524" fill="none" stroke="#5b5d60" strokeWidth="3" strokeDasharray="24 8" />
        <path d="M358 680L390 668L425 682V738L385 748L358 730Z" fill="#9ca3ae" opacity=".75" />
        <g fill="#55585c">
          <text transform="matrix(1.02 -.2 .35 .8 372 642)" fontSize="60">GÓRA</text>
          <text transform="matrix(.8 -.21 0 1 409 842)" fontSize="73">PRZÓD</text>
          <text transform="matrix(.4 .62 0 1 302 730)" fontSize="54">LEWO</text>
        </g>
      </g>
      <g transform="translate(3531 500)">
        <rect x="134" y="63" width="30" height="11" fill="#f4f4f4" stroke="#14181d" strokeWidth="2" />
        <path d="M200 46.500H222.500V69" fill="none" stroke="#e6e6e6" strokeWidth="3" />
        <rect x="197.500" y="53.500" width="18" height="18" fill="none" stroke="#f0f0f0" strokeWidth="6" />
        <path d="M257 50L279 71M279 50L257 71" stroke="#f0f0f0" strokeWidth="6.500" />
      </g>
    </g>
  );
}

function NavIcons() {
  return (
    <svg width="87" height="609" viewBox="0 0 87 609" fill="#5b616c" stroke="#474d55" strokeWidth="3" strokeLinejoin="round">
      <rect x="60" y="4" width="23" height="21" rx="9" stroke="none" fill="#4c5259" /><path d="M66 9L77 20M77 9L66 20" strokeWidth="2" stroke="#6d7379" />
      <path d="M43 43H70Q76 43 76 50V75Q76 90 66 99Q56 108 43 108Q10 105 10 75Q12 45 43 43Z" /><circle cx="43" cy="75" r="18" /><path d="M22 98L32 89M64 98L55 89" />
      <path d="M37 132H53L45 141Z" fill="#3f454d" stroke="none" />
      <path d="M1 156H86" stroke="#656b70" strokeWidth="1" />
      <path d="M33 236Q24 222 18 214Q8 209 9 205Q14 202 22 205L29 208L25 180Q26 172 31 175L38 197L41 173Q45 165 49 173L51 198L57 178Q62 173 64 178L60 203L68 190Q74 183 76 190Q70 215 58 236Z" strokeWidth="3.5" />
      <path d="M12 258L40 284M50 258L14 296" fill="none" strokeWidth="4" /><path d="M8 252H21L8 265ZM56 252H43L56 265ZM8 300V286L21 300Z" strokeWidth="1" fill="#474d55" />
      <path d="M66 307L76 317" strokeWidth="9" /><circle cx="55" cy="296" r="14.5" strokeWidth="4" />
      <path d="M37 342H53L45 351Z" fill="#3f454d" stroke="none" />
      <ellipse cx="42" cy="405" rx="33" ry="11" fill="none" strokeWidth="4" /><path d="M42 368L55 380H49V432H35V380H29Z" /><path d="M28 416H60" strokeWidth="4" /><path d="M16 416L29 406V426Z" fill="#474d55" stroke="none" />
      <path d="M37 456H53L45 466Z" fill="#3f454d" stroke="none" />
      <path d="M1 480H86" stroke="#656b70" strokeWidth="1" />
      <rect x="9" y="493" width="18" height="20" /><rect x="33" y="493" width="18" height="20" /><rect x="57" y="493" width="18" height="20" />
      <rect x="9" y="521" width="48" height="39" /><path d="M22 529L43 540L22 552Z" fill="#444a53" stroke="none" />
      <rect x="60" y="580" width="23" height="21" rx="9" stroke="none" fill="#4c5259" /><path d="M65 587H78M67 592H77L72 597Z" strokeWidth="1.5" stroke="#6d7379" />
    </svg>
  );
}

export default function App() {
  return (
    <Window>
      <Global />
      <TopBar />
      <TabRow>
        <Tab $on $pl={28} $pr={38}><Label w={282} lh={60}>Narzędzia główne</Label></Tab>
        {tabs.map(([name, ml, w]) => <Tab key={name} $pl={ml} $pr={0}><Label w={w} lh={60} color={c.dim}>{name}</Label></Tab>)}
        <Collapse><UpMark $w={15} $color="#666" /></Collapse>
        <Caret $mt={28} $ml={13} />
      </TabRow>
      <RibbonPanels />
      <DocTabs>
        <Slash $ml={20} $mt={21} />
        <Label w={138} ml={26} mt={22}>Początek</Label>
        <ActiveDoc>
          <Label w={145} mt={13} weight={700}>Klin.dxf*</Label>
          <CloseBox><svg width="25" height="23" viewBox="0 0 25 23" stroke="#aeb3ba" strokeWidth="5.5"><path d="M3 1L22 22M22 1L3 22" /></svg></CloseBox>
        </ActiveDoc>
        <Plus ml={28} mt={27} />
        <Slash $ml={31} $mt={21} />
      </DocTabs>
      <Strip />
      <Viewport>
        <Canvas width="3831" height="1319" viewBox="0 526 3831 1319">
          <Model />
          <AxisTripod />
          <ViewCube />
        </Canvas>
        <ViewLabel>
          <Label w={43} size={35}>[−]</Label>
          <Label w={411} ml={3} size={35}>[Góra][Model szkieletowy]</Label>
        </ViewLabel>
        <Ucs>
          <Label w={72} size={31} lh={40} color="#4a4d55" font="'Liberation Sans', Arial, sans-serif">GUW</Label>
          <svg width="26" height="15" viewBox="0 0 26 15"><path d="M1 1H25L13 14Z" fill="#adb0bc" stroke="#858896" /></svg>
        </Ucs>
        <NavBar><NavIcons /></NavBar>
      </Viewport>
      <Strip />
      <LayoutTabs>
        <ActiveLayout><Label w={105} weight={700}>Model</Label></ActiveLayout>
        <Label w={103} ml={24} mt={14}>Układ1</Label>
        <Slash $ml={30} $mt={12} />
        <Plus ml={31} mt={18} />
        <Slash $ml={31} $mt={12} />
      </LayoutTabs>
      <Status><Label w={1764} weight={600}>Naciśnij klawisz Esc lub Enter, aby wyjść lub kliknij prawym przyciskiem myszy, aby wyświetlić menu skrótów.</Label></Status>
    </Window>
  );
}
